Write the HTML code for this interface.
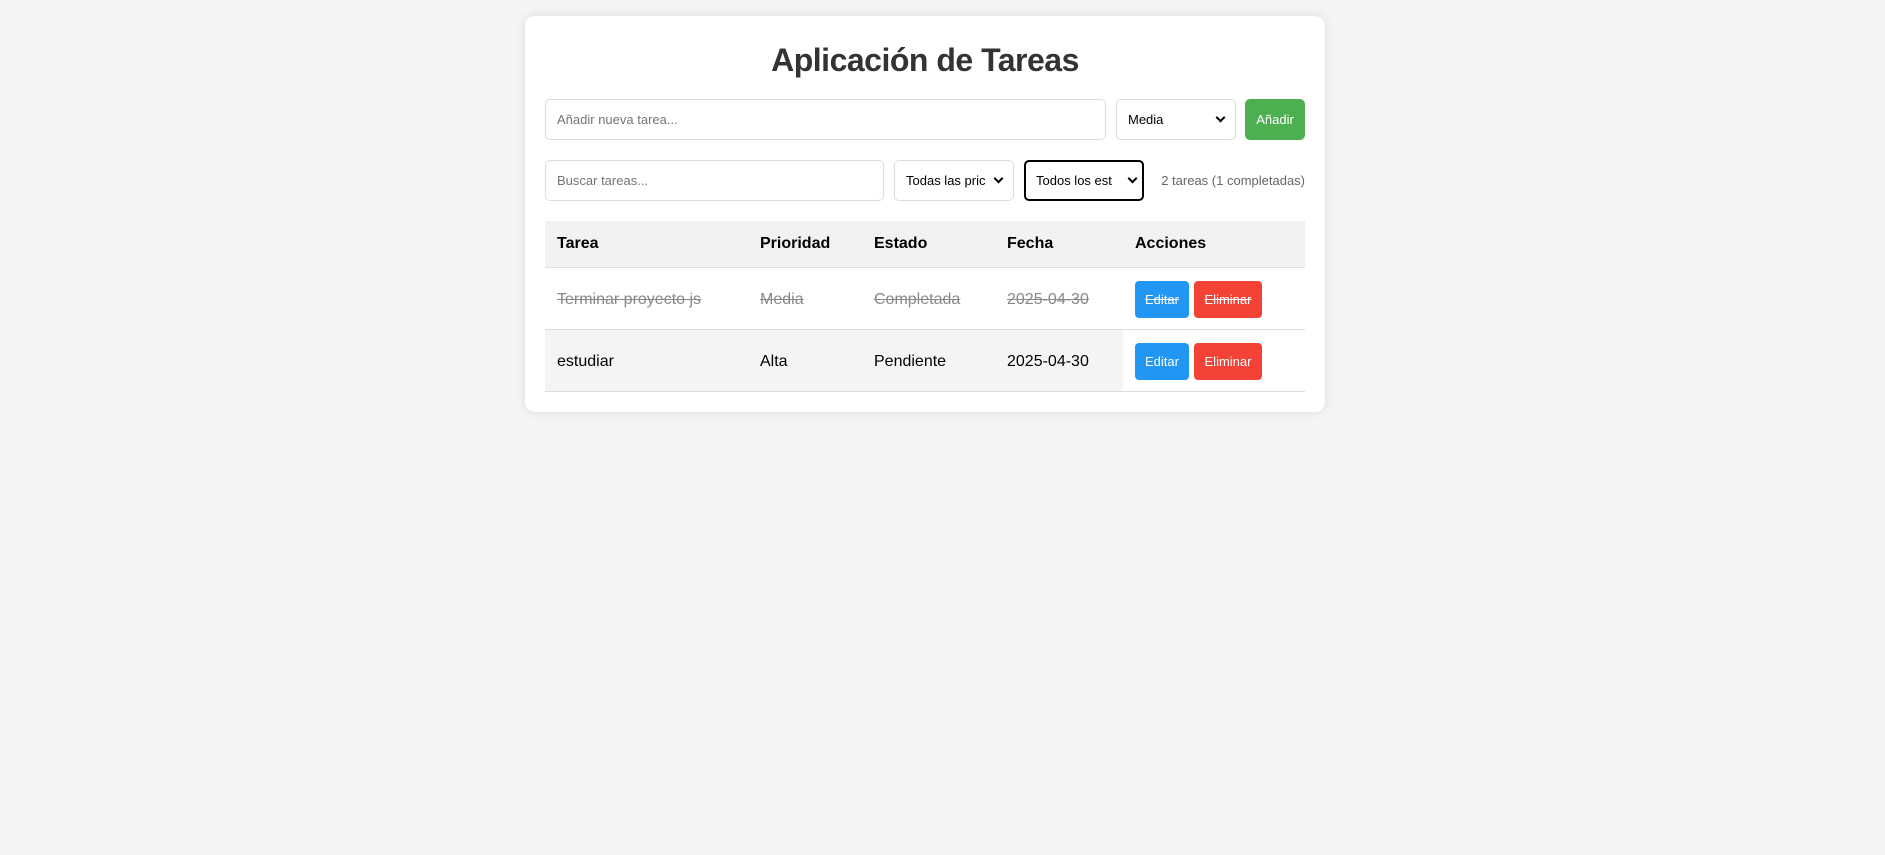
<!DOCTYPE html>
<html><head><meta charset="utf-8"><style>
*{box-sizing:border-box}
body{margin:0;background:#f4f4f4;font-family:"Liberation Sans",sans-serif;width:1885px;height:855px;overflow:hidden}
.card{position:absolute;left:525px;top:16px;width:800px;height:396px;background:#fff;border-radius:10px;box-shadow:0 0 10px rgba(0,0,0,0.1)}
h1{position:absolute;left:0;right:0;top:18px;margin:0;text-align:center;font-size:32px;font-weight:bold;color:#333;line-height:52px;letter-spacing:-0.5px}
.el{position:absolute;border:1px solid #ddd;border-radius:5px;background:#fff;font-size:13px;display:flex;align-items:center;padding:0 11px}
.ph{color:#757575}
.sel{justify-content:space-between;color:#000}
.chev{width:7px;height:7px;border-right:2px solid #000;border-bottom:2px solid #000;transform:rotate(45deg);margin-top:-4px}
table{position:absolute;left:20px;top:205px;width:760px;border-collapse:collapse;font-size:16px}
th,td{text-align:left;padding:0 12px;border-bottom:1px solid #ddd}
th{background:#f2f2f2;height:46px;font-weight:bold;font-size:16px}
td{height:62px;padding-top:3px}
tr.done td{color:#888;text-decoration:line-through}
tr.alt td{background:#f4f4f4}
.b{display:inline-block;color:#fff;font-size:13px;border-radius:4px;height:37px;line-height:37px;text-align:center;vertical-align:middle}
.e{background:#2196F3;width:54px}.d{background:#f44336;width:68px;margin-left:5px}
</style></head><body>
<div class="card">
<h1>Aplicación de Tareas</h1>
<div class="el ph" style="left:20px;top:83px;width:561px;height:41px">Añadir nueva tarea...</div>
<div class="el sel" style="left:591px;top:83px;width:120px;height:41px">Media<span class="chev"></span></div>
<div class="el" style="left:720px;top:83px;width:60px;height:41px;background:#4CAF50;border-color:#4CAF50;color:#fff;justify-content:center;padding:0">Añadir</div>
<div class="el ph" style="left:20px;top:144px;width:339px;height:41px">Buscar tareas...</div>
<div class="el sel" style="left:369px;top:144px;width:120px;height:41px">Todas las pric<span class="chev"></span></div>
<div class="el sel" style="left:499px;top:144px;width:120px;height:41px;border:2px solid #000;padding:0 6px 0 10px">Todos los est<span class="chev"></span></div>
<div style="position:absolute;left:628px;top:144px;height:41px;line-height:41px;font-size:13px;color:#666;width:152px;text-align:right;white-space:nowrap">2 tareas (1 completadas)</div>
<table>
<tr><th style="width:203px">Tarea</th><th style="width:114px">Prioridad</th><th style="width:133px">Estado</th><th style="width:128px">Fecha</th><th>Acciones</th></tr>
<tr class="done"><td>Terminar proyecto js</td><td>Media</td><td>Completada</td><td>2025-04-30</td><td style="text-decoration:none"><span class="b e"><s>Editar</s></span><span class="b d"><s>Eliminar</s></span></td></tr>
<tr class="alt"><td>estudiar</td><td>Alta</td><td>Pendiente</td><td>2025-04-30</td><td style="background:#fff"><span class="b e">Editar</span><span class="b d">Eliminar</span></td></tr>
</table>
</div>
</body></html>
